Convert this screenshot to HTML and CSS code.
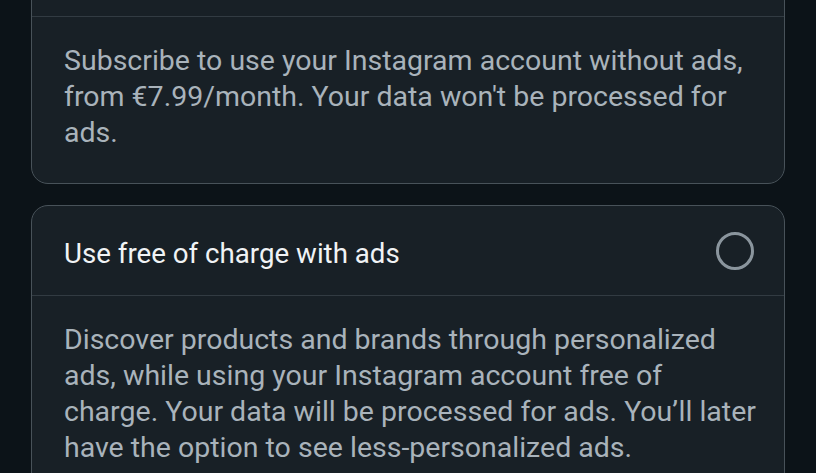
FILE: index.html
```html
<!DOCTYPE html>
<html lang="en">
<head>
<meta charset="utf-8">
<link rel="stylesheet" href="styles.css">
</head>
<body>
<main class="options">
  <section class="card card--first">
    <div class="card-head"></div>
    <div class="card-body">
      <p>Subscribe to use your Instagram account without ads, from €7.99/month. Your data won't be processed for ads.</p>
    </div>
  </section>
  <section class="card">
    <div class="card-head">
      <span class="card-title">Use free of charge with ads</span>
      <span class="radio" aria-hidden="true"></span>
    </div>
    <div class="card-body">
      <p>Discover products and brands through personalized ads, while using your Instagram account free of charge. Your data will be processed for ads. You’ll later have the option to see less-personalized ads.</p>
    </div>
  </section>
</main>
</body>
</html>
```

FILE: styles.css
```css
html, body {
  margin: 0;
  padding: 0;
  background: #0c1318;
  height: 100%;
  overflow: hidden;
}

body {
  font-family: Roboto, "Liberation Sans", sans-serif;
}

.options {
  display: flex;
  flex-direction: column;
  gap: 21px;
  padding: 0 31px;
}

.card {
  background: #182026;
  border: 1px solid #485259;
  border-radius: 17px;
  overflow: hidden;
}

.card--first {
  margin-top: -74px;
}

.card-head {
  height: 89px;
  display: flex;
  align-items: center;
  justify-content: space-between;
  padding: 0 30px 0 32px;
  border-bottom: 1px solid #323b42;
}

.card-title {
  color: #f0f3f5;
  font-size: 27.7px;
  padding-top: 5px;
}

.radio {
  width: 32px;
  height: 32px;
  border: 3px solid #8a959d;
  border-radius: 50%;
}

.card-body {
  padding: 26px 28px 32px 32px;
}

.card-body p {
  margin: 0;
  color: #a9b3bb;
  font-size: 28.5px;
  line-height: 36px;
}
```
